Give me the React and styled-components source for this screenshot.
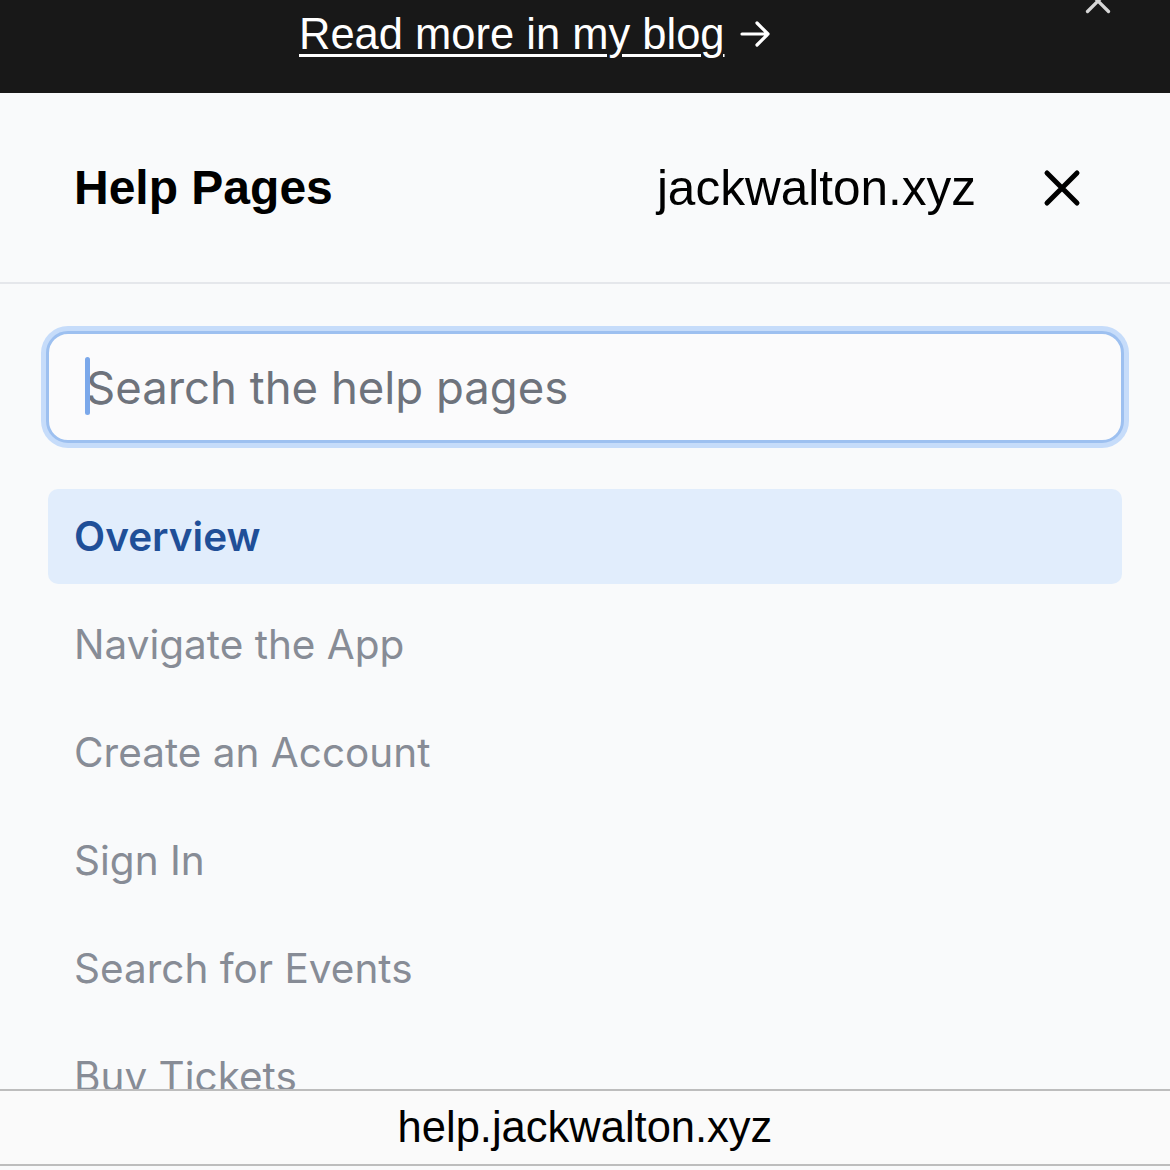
import React from 'react';
import styled, { createGlobalStyle } from 'styled-components';

const GlobalStyle = createGlobalStyle`
  html, body {
    margin: 0;
    padding: 0;
    background: #f9fafb;
  }
  * { box-sizing: border-box; }
`;

const Screen = styled.div`
  width: 1170px;
  height: 1170px;
  display: flex;
  flex-direction: column;
  overflow: hidden;
  background: #f9fafb;
`;

// --- Banner ---
const Banner = styled.div`
  position: relative;
  height: 93px;
  flex-shrink: 0;
  background: #181818;
  display: flex;
  align-items: flex-start;
  padding-left: 299px;
  padding-top: 6px;
`;

const BannerLink = styled.a`
  display: flex;
  align-items: center;
  gap: 14px;
  color: #ffffff;
  font-family: "Liberation Sans", Arial, sans-serif;
  font-size: 43.5px;
  line-height: 56px;
  text-decoration: none;
  white-space: nowrap;

  u {
    text-decoration: underline;
    text-decoration-thickness: 3px;
    text-underline-offset: 5px;
  }
`;

const BannerClose = styled.button`
  position: absolute;
  top: -14px;
  right: 56px;
  width: 32px;
  height: 32px;
  padding: 0;
  border: none;
  background: none;
  color: #d6d6d6;
`;

// --- Header ---
const Header = styled.header`
  height: 191px;
  flex-shrink: 0;
  display: flex;
  align-items: center;
  padding: 0 86px 0 74px;
  border-bottom: 2px solid #e5e7eb;
`;

const Title = styled.h1`
  margin: 0;
  flex: 1;
  font-family: "Liberation Sans", Arial, sans-serif;
  font-weight: 700;
  font-size: 48px;
  color: #000;
`;

const Domain = styled.span`
  font-family: "Liberation Sans", Arial, sans-serif;
  font-size: 49.5px;
  color: #000;
  margin-right: 64px;
`;

const CloseButton = styled.button`
  width: 44px;
  height: 44px;
  padding: 0;
  border: none;
  background: none;
  color: #000;
  display: flex;
  align-items: center;
  justify-content: center;
`;

// --- Body ---
const Body = styled.main`
  flex: 1;
  min-height: 0;
  overflow: hidden;
  padding: 47px 46px 0;
`;

const SearchBox = styled.div`
  position: relative;
  height: 112px;
  border: 3px solid #9dc0f0;
  border-radius: 22px;
  box-shadow: 0 0 0 5px #c6dcfa;
  background: #fbfbfc;
  display: flex;
  align-items: center;
  padding-left: 37px;
`;

const Caret = styled.span`
  position: absolute;
  left: 36px;
  top: 23px;
  width: 5px;
  height: 58px;
  border-radius: 3px;
  background: #7ba8ea;
`;

const SearchInput = styled.input`
  flex: 1;
  border: none;
  outline: none;
  background: transparent;
  font-family: Inter, "Noto Sans", sans-serif;
  font-size: 45.5px;
  color: #111;
  padding: 0;

  &::placeholder {
    color: #6e737c;
  }
`;

const NavList = styled.nav`
  margin-top: 46px;
  display: flex;
  flex-direction: column;
  gap: 13px;
  padding: 0 2px;
`;

const NavItem = styled.a`
  height: 95px;
  flex-shrink: 0;
  display: flex;
  align-items: center;
  padding-left: 26px;
  border-radius: 10px;
  font-family: Inter, "Noto Sans", sans-serif;
  font-size: 40.5px;
  font-weight: ${p => (p.$active ? 600 : 400)};
  color: ${p => (p.$active ? '#1f4f98' : '#878c96')};
  background: ${p => (p.$active ? '#e1edfc' : 'transparent')};
  text-decoration: none;
  white-space: nowrap;
`;

// --- Bottom URL bar ---
const UrlBar = styled.footer`
  height: 77px;
  flex-shrink: 0;
  border-top: 2px solid #bdbdbd;
  border-bottom: 2px solid #bdbdbd;
  background: #fafafa;
  display: flex;
  align-items: center;
  justify-content: center;
  font-family: "Liberation Sans", Arial, sans-serif;
  font-size: 43.5px;
  color: #000;
  margin-bottom: 4px;
`;

const XIcon = ({ size, stroke }) => (
  <svg width={size} height={size} viewBox="0 0 24 24" fill="none"
    stroke="currentColor" strokeWidth={stroke} strokeLinecap="round">
    <path d="M3 3 L21 21 M21 3 L3 21" />
  </svg>
);

const ArrowIcon = () => (
  <svg width="32" height="30" viewBox="0 0 32 30" fill="none"
    stroke="currentColor" strokeWidth="3.2" strokeLinecap="round" strokeLinejoin="round">
    <path d="M3 15 H29 M18 4 L29 15 L18 26" />
  </svg>
);

const pages = [
  'Overview',
  'Navigate the App',
  'Create an Account',
  'Sign In',
  'Search for Events',
  'Buy Tickets',
];

const App = () => (
  <>
    <GlobalStyle />
    <Screen>
      <Banner>
        <BannerLink href="#">
          <u>Read more in my blog</u>
          <ArrowIcon />
        </BannerLink>
        <BannerClose aria-label="Dismiss">
          <XIcon size={28} stroke={2.8} />
        </BannerClose>
      </Banner>

      <Header>
        <Title>Help Pages</Title>
        <Domain>jackwalton.xyz</Domain>
        <CloseButton aria-label="Close">
          <XIcon size={40} stroke={3} />
        </CloseButton>
      </Header>

      <Body>
        <SearchBox>
          <Caret />
          <SearchInput placeholder="Search the help pages" />
        </SearchBox>

        <NavList>
          {pages.map((page, i) => (
            <NavItem key={page} href="#" $active={i === 0}>{page}</NavItem>
          ))}
        </NavList>
      </Body>

      <UrlBar>help.jackwalton.xyz</UrlBar>
    </Screen>
  </>
);

export default App;
